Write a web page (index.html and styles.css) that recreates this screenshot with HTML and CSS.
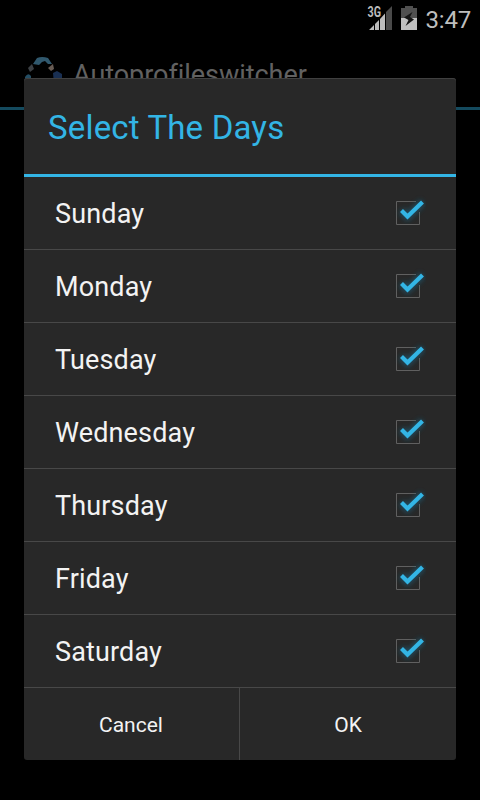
FILE: index.html
```html
<!DOCTYPE html>
<html lang="en">
<head>
    <meta charset="UTF-8">
    <meta name="viewport" content="width=device-width, initial-scale=1.0">
    <title>Autoprofileswitcher</title>
    <link rel="stylesheet" href="styles.css">
</head>
<body>
    <div class="status-bar">
        <svg class="signal" width="26" height="30" viewBox="0 -6 26 30">
            <path d="M2 24 L7 19 V24 Z M8 18 L12 14 V24 H8 Z M13 13 L18 7.500 V24 H13 Z" fill="#bcbcbc"/>
            <path d="M19 6 L25 0 V24 H19 Z" fill="#4a4a4a"/>
            <text class="network" x="0.500" y="11" textLength="13.500" lengthAdjust="spacingAndGlyphs">3G</text>
        </svg>
        <svg class="battery" width="16" height="24" viewBox="0 0 16 24">
            <path d="M4 0 H12 V2 H16 V12 H0 V2 H4 Z" fill="#505050"/>
            <path d="M0 12 H16 V24 H0 Z" fill="#c0c0c0"/>
            <path d="M11.500 6 L3 11.500 L7.500 14 L4.500 20 L13 13.500 L9 11 Z" fill="#151515"/>
        </svg>
        <span class="clock">3:47</span>
    </div>

    <div class="action-bar">
        <svg class="app-icon" width="40" height="40" viewBox="0 0 40 40">
            <path d="M9 8 L13 2 Q18 0 24 2 L28 8 L24 8 L21 5 L18 6 L15 9 Z" fill="#30586d"/>
            <path d="M4 12 L8 8 L10 13 L6 16 Z" fill="#3c4044"/>
            <path d="M24 12 L29 8 L30 13 L27 15 Z" fill="#685c54"/>
            <path d="M1 21 Q4 16 7 20 V28 H1 Z" fill="#244e64"/>
            <path d="M29 17 L33 15 L38 18 V28 H30 Z" fill="#192f52"/>
        </svg>
        <span class="app-name">Autoprofileswitcher</span>
    </div>

    <div class="dialog">
        <h1 class="dialog-title">Select The Days</h1>
        <ul class="days">
            <li class="day"><span>Sunday</span><svg class="check" width="36" height="36" viewBox="0 0 36 36"><use href="#checked"/></svg></li>
            <li class="day"><span>Monday</span><svg class="check" width="36" height="36" viewBox="0 0 36 36"><use href="#checked"/></svg></li>
            <li class="day"><span>Tuesday</span><svg class="check" width="36" height="36" viewBox="0 0 36 36"><use href="#checked"/></svg></li>
            <li class="day"><span>Wednesday</span><svg class="check" width="36" height="36" viewBox="0 0 36 36"><use href="#checked"/></svg></li>
            <li class="day"><span>Thursday</span><svg class="check" width="36" height="36" viewBox="0 0 36 36"><use href="#checked"/></svg></li>
            <li class="day"><span>Friday</span><svg class="check" width="36" height="36" viewBox="0 0 36 36"><use href="#checked"/></svg></li>
            <li class="day"><span>Saturday</span><svg class="check" width="36" height="36" viewBox="0 0 36 36"><use href="#checked"/></svg></li>
        </ul>
        <div class="buttons">
            <button class="button cancel">Cancel</button>
            <button class="button">OK</button>
        </div>
    </div>

    <!-- shared checkbox symbol -->
    <svg class="defs" width="0" height="0">
        <defs>
            <filter id="glow" x="-50%" y="-50%" width="200%" height="200%">
                <feGaussianBlur stdDeviation="2.500"/>
            </filter>
            <g id="checked">
                <path d="M26 6.500 H6.500 V29.500 H29.500 V17" fill="none" stroke="#606060"/>
                <path d="M11.500 15.500 L17.500 21.500 L32.500 7" fill="none" stroke="#1b5d78" stroke-width="7" opacity="0.7" filter="url(#glow)"/>
                <path d="M11.500 15.500 L17.500 21.500 L32.500 7" fill="none" stroke="#33b5e5" stroke-width="4.200"/>
            </g>
        </defs>
    </svg>
</body>
</html>
```

FILE: styles.css
```css
* {
    box-sizing: border-box;
}

body {
    margin: 0;
    height: 800px;
    position: relative;
    overflow: hidden;
    background: #000;
    color: #f3f3f3;
    font-family: Roboto, sans-serif;
}

.status-bar {
    display: flex;
    justify-content: flex-end;
    align-items: flex-start;
    height: 38px;
    padding-right: 9px;
}

.battery {
    margin: 6px 9px 0 8px;
}

.network {
    font-size: 14px;
    font-weight: bold;
    fill: #bcbcbc;
    stroke: #000;
    stroke-width: 2px;
    paint-order: stroke;
}

.clock {
    margin-top: 6px;
    font-size: 24px;
    line-height: 28px;
    letter-spacing: -0.2px;
    color: #bebebe;
}

.action-bar {
    display: flex;
    align-items: center;
    height: 72px;
    padding-left: 24px;
    border-bottom: 3px solid #144a5e;
}

.app-icon {
    margin-top: 6px;
}

.app-name {
    margin: 4px 0 0 9px;
    font-size: 27px;
    letter-spacing: -0.05px;
    color: #616161;
}

/* the dialog lies over the dimmed activity */
.dialog {
    position: absolute;
    top: 78px;
    left: 24px;
    width: 432px;
    height: 682px;
    background: #282828;
    border-radius: 3px;
    box-shadow: inset 0 1px 0 #404040;
}

.dialog-title {
    margin: 0;
    height: 99px;
    padding-left: 24px;
    border-bottom: 3px solid #33b5e5;
    font-size: 33px;
    font-weight: normal;
    line-height: 100px;
    letter-spacing: 0.17px;
    color: #33b5e5;
}

.days {
    list-style: none;
    margin: 0;
    padding: 0;
}

.day {
    display: flex;
    justify-content: space-between;
    align-items: center;
    height: 73px;
    padding: 0 30px 0 31px;
    border-bottom: 1px solid #484848;
    font-size: 27px;
    letter-spacing: 0.15px;
}

.day span {
    padding-top: 2px;
}

.buttons {
    display: flex;
    height: 72px;
}

.button {
    flex: 1;
    padding: 2px 0 0;
    background: none;
    border: none;
    font-family: inherit;
    font-size: 21px;
    color: #f3f3f3;
}

.cancel {
    flex: 0 0 216px;
    padding-right: 1px;
    border-right: 1px solid #484848;
}

.defs {
    position: absolute;
}
```
